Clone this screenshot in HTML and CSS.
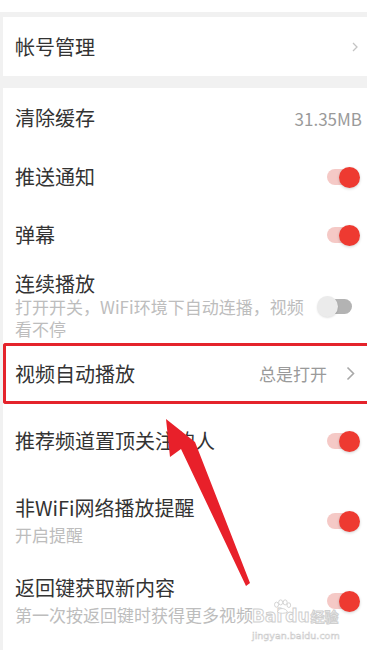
FILE: index.html
```html
<!DOCTYPE html>
<html lang="zh-CN">
<head>
<meta charset="utf-8">
<title>设置</title>
<link rel="stylesheet" href="styles.css">
</head>
<body>
<div class="page">
  <div class="section stub"></div>

  <div class="section">
    <div class="row row-account">
      <span class="title">帐号管理</span>
      <svg class="chev-sm" width="6" height="10" viewBox="0 0 6 10"><polyline points="1,1 5,5 1,9" fill="none" stroke="#c4c4c4" stroke-width="1.3"/></svg>
    </div>
  </div>

  <div class="section grow">
    <div class="row row-cache">
      <span class="title">清除缓存</span>
      <span class="value">31.35MB</span>
    </div>
    <div class="row row-single">
      <span class="title">推送通知</span>
      <span class="toggle on"><span class="track"></span><span class="knob"></span></span>
    </div>
    <div class="row row-single">
      <span class="title">弹幕</span>
      <span class="toggle on"><span class="track"></span><span class="knob"></span></span>
    </div>
    <div class="row row-cont">
      <div class="text">
        <div class="title">连续播放</div>
        <div class="sub">打开开关，WiFi环境下自动连播，视频</div>
        <div class="sub">看不停</div>
      </div>
      <span class="toggle off"><span class="knob"></span><span class="track"></span></span>
    </div>
    <div class="row row-video">
      <span class="title">视频自动播放</span>
      <span class="value value-open">总是打开</span>
      <svg class="chev" width="9" height="15" viewBox="0 0 9 15"><polyline points="1.5,1.5 7.5,7.5 1.5,13.5" fill="none" stroke="#a8a8a8" stroke-width="1.6"/></svg>
    </div>
    <div class="row row-tall">
      <span class="title">推荐频道置顶关注的人</span>
      <span class="toggle on"><span class="track"></span><span class="knob"></span></span>
    </div>
    <div class="row row-two">
      <div class="text">
        <div class="title">非WiFi网络播放提醒</div>
        <div class="sub">开启提醒</div>
      </div>
      <span class="toggle on"><span class="track"></span><span class="knob"></span></span>
    </div>
    <div class="row row-two row-last">
      <div class="text">
        <div class="title">返回键获取新内容</div>
        <div class="sub">第一次按返回键时获得更多视频</div>
      </div>
      <span class="toggle on"><span class="track"></span><span class="knob"></span></span>
    </div>
  </div>

  <svg class="arrow" width="367" height="650" viewBox="0 0 367 650">
    <polygon points="166,419 170,457 181,449 246,586 250,583 195,442" fill="#e8202a"/>
  </svg>

  <div class="watermark">
    <div class="wm-main"><span>Bai</span><svg class="paw" width="20" height="15" viewBox="0 0 22 16"><g fill="#fff" stroke="#cfcfcf" stroke-width="1"><ellipse cx="5" cy="6" rx="2.2" ry="2.8"/><ellipse cx="9.5" cy="3.5" rx="2.2" ry="2.8"/><ellipse cx="14.5" cy="3.5" rx="2.2" ry="2.8"/><ellipse cx="18.5" cy="6.5" rx="2" ry="2.6"/><path d="M6 14 C7 9 15 9 17 14 C15 16 8 16 6 14 Z"/></g></svg><span>du</span><span class="wm-cn">经验</span></div>
    <div class="wm-url">jingyan.baidu.com</div>
  </div>
</div>
</body>
</html>
```

FILE: styles.css
```css
html, body {
  margin: 0;
  padding: 0;
}
body {
  background: #f1f1f1;
  font-family: "Noto Sans CJK SC", "Noto Sans", sans-serif;
  color: #333;
  width: 367px;
  height: 650px;
  overflow: hidden;
}
.page {
  position: relative;
  height: 650px;
  padding-left: 3px;
  display: flex;
  flex-direction: column;
}
.section {
  background: #fff;
  display: flex;
  flex-direction: column;
}
.grow {
  flex: 1;
}
.stub {
  height: 12px;
  margin-left: -3px;
}
.stub + .section {
  margin-top: 5px;
}
.section + .section + .section {
  margin-top: 12px;
}
.row {
  display: flex;
  align-items: center;
  padding: 0 7px 0 12px;
  box-sizing: border-box;
}
.title {
  font-size: 20px;
  line-height: 24px;
  color: #333;
  flex: 1;
  white-space: nowrap;
}
.text {
  flex: 1;
  display: flex;
  flex-direction: column;
}
.sub {
  font-size: 17px;
  line-height: 22px;
  color: #bdbdbd;
  white-space: nowrap;
}
.value {
  font-size: 17px;
  color: #9a9a9a;
}
.row-account {
  height: 59px;
  padding-right: 9px;
}
.row-cache {
  height: 60px;
  padding-right: 5px;
}
.row-single {
  height: 58px;
}
.row-cont {
  height: 79px;
  padding-top: 8px;
  padding-bottom: 3px;
  padding-right: 15px;
}
.row-video {
  height: 61px;
  border: 3px solid #e4232b;
  border-right: 0;
  border-radius: 3px 0 0 3px;
  padding-left: 9px;
  padding-right: 12px;
}
.value-open {
  margin-right: 19px;
}
.row-tall {
  height: 78px;
  padding-bottom: 4px;
}
.row-two {
  height: 78px;
  padding-top: 14px;
  padding-bottom: 14px;
}
.row-two .sub {
  margin-top: 4px;
}
.row-last {
  height: 80px;
  padding-top: 16px;
}
.toggle {
  display: flex;
  align-items: center;
  height: 21px;
}
.toggle .track {
  width: 25px;
  height: 16px;
  border-radius: 8px;
  background: #f5c9c6;
}
.toggle .knob {
  width: 21px;
  height: 21px;
  border-radius: 50%;
  background: #ee3a31;
  margin-left: -13px;
  box-shadow: 0 1px 3px rgba(0, 0, 0, 0.18);
}
.toggle.off .knob {
  position: relative;
  z-index: 1;
  margin-left: 0;
  background: #ebebeb;
  box-shadow: 0 1px 2px rgba(0, 0, 0, 0.12);
}
.toggle.off .track {
  width: 24px;
  height: 15px;
  margin-left: -10px;
  background: #b3b3b3;
}
.arrow {
  position: absolute;
  left: 0;
  top: 0;
  pointer-events: none;
}
.watermark {
  position: absolute;
  left: 252px;
  top: 601px;
  white-space: nowrap;
  color: #fff;
  pointer-events: none;
}
.wm-main {
  display: flex;
  align-items: flex-end;
  height: 26px;
  font-family: "DejaVu Sans", sans-serif;
  font-weight: bold;
  font-size: 17px;
  line-height: 21px;
  -webkit-text-stroke: 1px #cfcfcf;
}
.paw {
  align-self: flex-start;
  margin: -2px -7px 0 -10px;
}
.wm-cn {
  font-family: "Noto Sans CJK SC", sans-serif;
  font-size: 14px;
  margin-left: 1px;
}
.wm-url {
  font-family: "DejaVu Sans", sans-serif;
  font-size: 9.5px;
  line-height: 12px;
  color: #fff;
  -webkit-text-stroke: 0.5px #c8c8c8;
  margin-top: 3px;
}
```
